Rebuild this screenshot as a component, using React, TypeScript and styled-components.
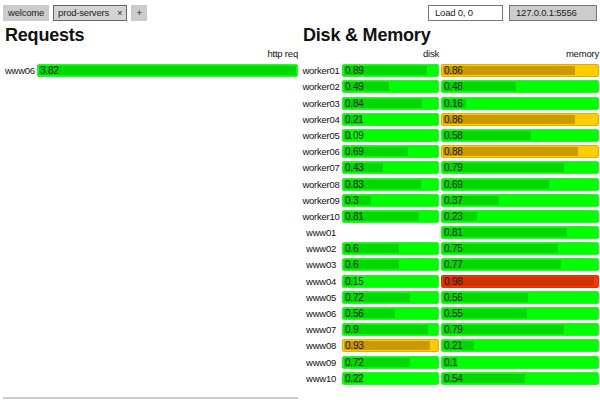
import React from 'react';
import styled, { createGlobalStyle } from 'styled-components';

type State = 'ok' | 'warning' | 'critical';

const colors: Record<State, { outer: string; inner: string; edge: string }> = {
    ok: { outer: '#00ff00', inner: '#00c800', edge: '#33ee33' },
    warning: { outer: '#ffcc00', inner: '#cc9900', edge: '#e0b000' },
    critical: { outer: '#ff3300', inner: '#cc3300', edge: '#dd3300' },
};

const GlobalStyle = createGlobalStyle`
    html, body {
        margin: 0;
        padding: 0;
        background: #fff;
        font-family: "Liberation Sans", Arial, sans-serif;
        color: #111;
    }
`;

const Page = styled.div`
    width: 600px;
    height: 400px;
    display: flex;
    flex-direction: column;
    overflow: hidden;
`;

const TopBar = styled.div`
    display: flex;
    align-items: center;
    height: 22px;
    padding: 3px 3px 0 3px;
    box-sizing: border-box;
    gap: 4px;
    font-size: 9.5px;
    letter-spacing: -0.2px;
`;

const Tab = styled.div<{ $active?: boolean }>`
    height: 16px;
    padding: 0 4px;
    box-sizing: border-box;
    background: ${(p) => (p.$active ? '#d4d4d4' : '#cccccc')};
    border: ${(p) => (p.$active ? '1px solid #666' : '1px solid #cccccc')};
    line-height: 14px;
    color: #222;
    display: flex;
    gap: 8px;
`;

const Spacer = styled.div`
    flex: 1;
`;

const Field = styled.div<{ $grey?: boolean }>`
    height: 16px;
    box-sizing: border-box;
    border: 1px solid #777;
    background: ${(p) => (p.$grey ? '#cccccc' : '#fff')};
    padding: 0 6px;
    line-height: 14px;
    color: #222;
`;

const Panels = styled.div`
    flex: 1;
    display: flex;
`;

const Panel = styled.div<{ $w: number }>`
    width: ${(p) => p.$w}px;
    display: flex;
    flex-direction: column;
`;

const Title = styled.h1`
    margin: 3px 0 0 5px;
    font-size: 18px;
    font-weight: bold;
    line-height: 20px;
    letter-spacing: -0.2px;
`;

const Grid = styled.div<{ $cols: string }>`
    display: grid;
    grid-template-columns: ${(p) => p.$cols};
    grid-auto-rows: 13px;
    row-gap: 3.2px;
    column-gap: 2px;
    margin-top: 3px;
    font-size: 10px;
`;

const HeadCell = styled.div`
    text-align: right;
    font-size: 9.5px;
    line-height: 11px;
    letter-spacing: -0.2px;
    color: #111;
`;

const Label = styled.div<{ $align?: string }>`
    font-size: 9.5px;
    letter-spacing: -0.25px;
    line-height: 13px;
    text-align: ${(p) => p.$align || 'center'};
    white-space: nowrap;
    color: #111;
`;

const Bar = styled.div<{ $state: State }>`
    position: relative;
    height: 13px;
    border-radius: 2px;
    background: ${(p) => colors[p.$state].outer};
    border: 1px solid ${(p) => colors[p.$state].edge};
    box-sizing: border-box;
    overflow: hidden;
`;

const Fill = styled.div<{ $state: State }>`
    position: absolute;
    left: 1px;
    top: 1px;
    bottom: 1px;
    border-radius: 1px;
    background: ${(p) => colors[p.$state].inner};
    opacity: ${(p) => (p.$state === 'ok' ? 0.7 : 1)};
`;

const Value = styled.span`
    position: relative;
    padding-left: 2px;
    font-size: 10px;
    line-height: 11px;
    letter-spacing: -0.2px;
    color: #1a1a1a;
`;

const BottomRule = styled.div`
    margin: auto 0 1px 3px;
    width: 295px;
    height: 2px;
    background: #cccccc;
`;

function Cell({ v, state = 'ok' }: { v?: number; state?: State }) {
    if (v === undefined) return <div />;
    return (
        <Bar $state={state}>
            <Fill $state={state} style={{ width: `calc(${Math.min(v, 1) * 100}% - 2px)` }} />
            <Value>{v}</Value>
        </Bar>
    );
}

const hosts: [string, number | undefined, State, number, State][] = [
    ['worker01', 0.89, 'ok', 0.86, 'warning'],
    ['worker02', 0.49, 'ok', 0.48, 'ok'],
    ['worker03', 0.84, 'ok', 0.16, 'ok'],
    ['worker04', 0.21, 'ok', 0.86, 'warning'],
    ['worker05', 0.09, 'ok', 0.58, 'ok'],
    ['worker06', 0.69, 'ok', 0.88, 'warning'],
    ['worker07', 0.43, 'ok', 0.79, 'ok'],
    ['worker08', 0.83, 'ok', 0.69, 'ok'],
    ['worker09', 0.3, 'ok', 0.37, 'ok'],
    ['worker10', 0.81, 'ok', 0.23, 'ok'],
    ['www01', undefined, 'ok', 0.81, 'ok'],
    ['www02', 0.6, 'ok', 0.75, 'ok'],
    ['www03', 0.6, 'ok', 0.77, 'ok'],
    ['www04', 0.15, 'ok', 0.98, 'critical'],
    ['www05', 0.72, 'ok', 0.56, 'ok'],
    ['www06', 0.56, 'ok', 0.55, 'ok'],
    ['www07', 0.9, 'ok', 0.79, 'ok'],
    ['www08', 0.93, 'warning', 0.21, 'ok'],
    ['www09', 0.72, 'ok', 0.1, 'ok'],
    ['www10', 0.22, 'ok', 0.54, 'ok'],
];

export default function App() {
    return (
        <Page>
            <GlobalStyle />
            <TopBar>
                <Tab>welcome</Tab>
                <Tab $active>
                    <span>prod-servers</span>
                    <span>×</span>
                </Tab>
                <Tab>+</Tab>
                <Spacer />
                <Field style={{ width: 75, marginRight: 2 }}>Load 0, 0</Field>
                <Field $grey style={{ width: 88 }}>
                    127.0.0.1:5556
                </Field>
            </TopBar>
            <Panels>
                <Panel $w={300}>
                    <Title>Requests</Title>
                    <Grid $cols="30px 261px" style={{ marginLeft: 5 }}>
                        <div />
                        <HeadCell>http req</HeadCell>
                        <Label $align="left">www06</Label>
                        <Cell v={3.82} />
                    </Grid>
                    <BottomRule />
                </Panel>
                <Panel $w={300}>
                    <Title style={{ marginLeft: 3 }}>Disk &amp; Memory</Title>
                    <Grid $cols="38px 97px 158px" style={{ marginLeft: 2 }}>
                        <div />
                        <HeadCell>disk</HeadCell>
                        <HeadCell>memory</HeadCell>
                        {hosts.map(([name, d, ds, m, ms]) => (
                            <React.Fragment key={name}>
                                <Label>{name}</Label>
                                <Cell v={d} state={ds} />
                                <Cell v={m} state={ms} />
                            </React.Fragment>
                        ))}
                    </Grid>
                </Panel>
            </Panels>
        </Page>
    );
}
